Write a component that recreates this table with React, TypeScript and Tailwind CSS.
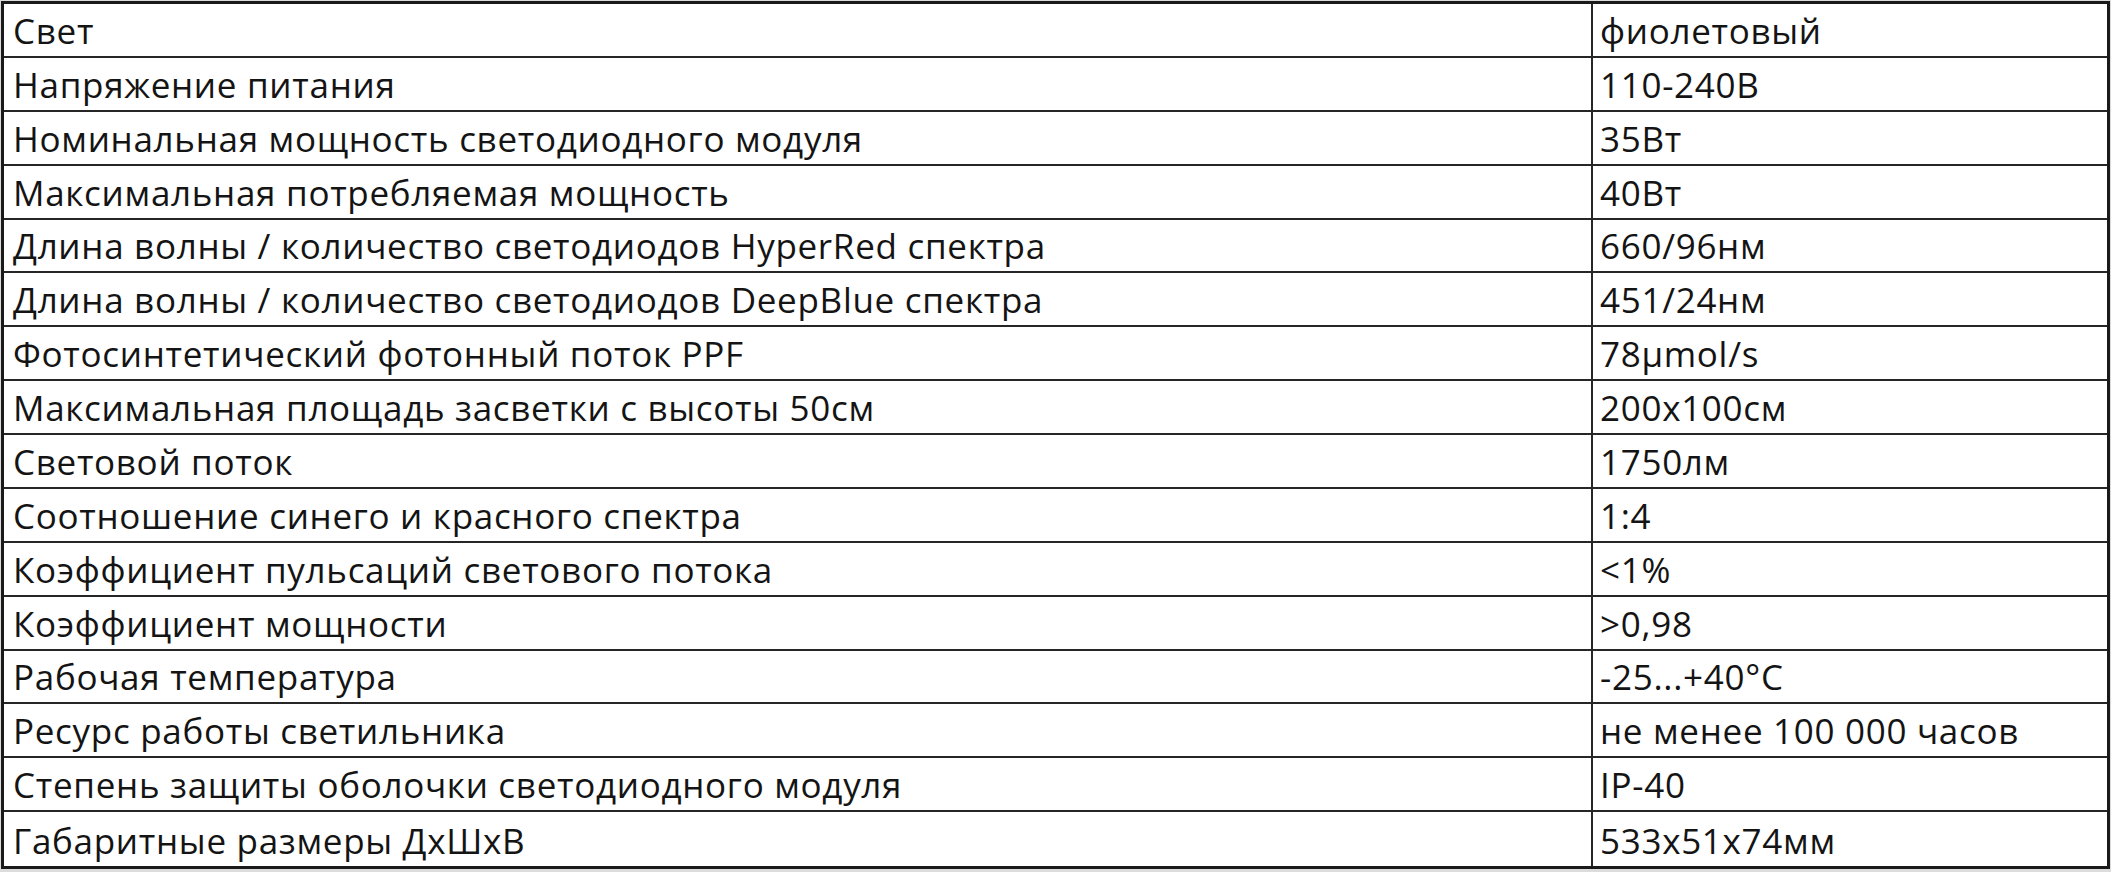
import React from "react";

const rows: [string, string][] = [
  ["Свет", "фиолетовый"],
  ["Напряжение питания", "110-240В"],
  ["Номинальная мощность светодиодного модуля", "35Вт"],
  ["Максимальная потребляемая мощность", "40Вт"],
  ["Длина волны / количество светодиодов HyperRed спектра", "660/96нм"],
  ["Длина волны / количество светодиодов DeepBlue спектра", "451/24нм"],
  ["Фотосинтетический фотонный поток PPF", "78µmol/s"],
  ["Максимальная площадь засветки с высоты 50см", "200x100см"],
  ["Световой поток", "1750лм"],
  ["Соотношение синего и красного спектра", "1:4"],
  ["Коэффициент пульсаций светового потока", "<1%"],
  ["Коэффициент мощности", ">0,98"],
  ["Рабочая температура", "-25...+40°C"],
  ["Ресурс работы светильника", "не менее 100 000 часов"],
  ["Степень защиты оболочки светодиодного модуля", "IP-40"],
  ["Габаритные размеры ДхШхВ", "533x51x74мм"],
];

export default function App() {
  return (
    <div className="w-[2111px] h-[872px] bg-[#dcdcdc] overflow-hidden">
      <div className="ml-[1px] mt-[1px] w-[2109px] h-[868px] bg-white border-[3px] border-[#1a1a1a] grid grid-rows-[repeat(16,1fr)] text-[#141414] font-['Open_Sans','Liberation_Sans',sans-serif] text-[35px] tracking-[0.7px]">
        {rows.map(([k, v], i) => (
          <div
            key={i}
            className={
              "grid grid-cols-[1589px_1fr] " +
              (i < rows.length - 1 ? "border-b-2 border-[#262626]" : "")
            }
          >
            <div className="border-r-2 border-[#262626] pl-[9px] flex items-end pb-[8px] leading-none whitespace-nowrap">
              {k}
            </div>
            <div className="pl-[7px] flex items-end pb-[8px] leading-none whitespace-nowrap">
              {v}
            </div>
          </div>
        ))}
      </div>
    </div>
  );
}
